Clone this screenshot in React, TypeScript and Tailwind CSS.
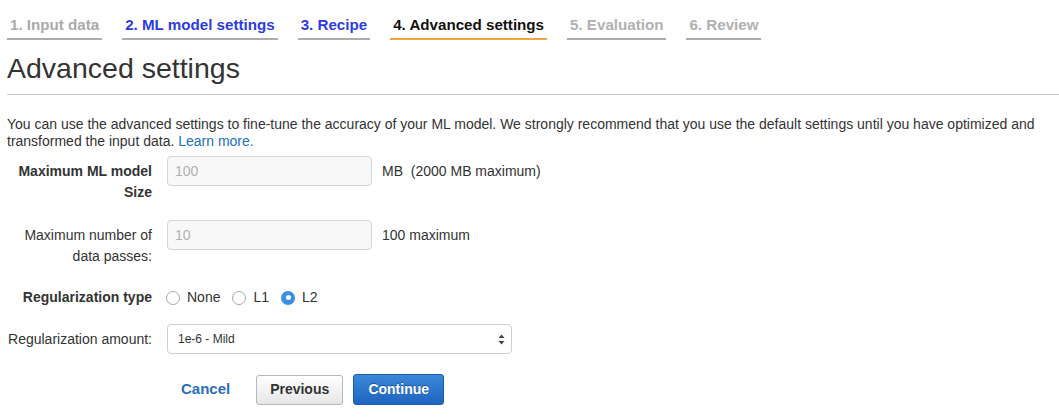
import React from 'react';

const steps = [
  { label: '1. Input data', text: 'text-[#aaaaaa]', line: 'border-[#acacac]' },
  { label: '2. ML model settings', text: 'text-[#2d3be6]', line: 'border-[#acacac]' },
  { label: '3. Recipe', text: 'text-[#2d3be6]', line: 'border-[#acacac]' },
  { label: '4. Advanced settings', text: 'text-[#111111]', line: 'border-[#f5a33a]' },
  { label: '5. Evaluation', text: 'text-[#b0b0b0]', line: 'border-[#acacac]' },
  { label: '6. Review', text: 'text-[#b0b0b0]', line: 'border-[#acacac]' },
];

function Radio({ label, checked }: { label: string; checked?: boolean }) {
  return (
    <label className="flex items-center gap-[7px]">
      {checked ? (
        <span className="flex h-[14px] w-[14px] items-center justify-center rounded-full bg-[#3a8ee6]">
          <span className="h-[5px] w-[5px] rounded-full bg-white" />
        </span>
      ) : (
        <span className="h-[14px] w-[14px] rounded-full border border-[#a8a8a8] bg-white" />
      )}
      <span>{label}</span>
    </label>
  );
}

export default function App() {
  return (
    <div
      className="min-h-[420px] w-[1059px] bg-white text-[14px] text-[#333333]"
      style={{ fontFamily: '"Liberation Sans", Arial, sans-serif' }}
    >
      {/* wizard steps */}
      <div className="flex gap-[20px] pl-[7px] pt-[16px]">
        {steps.map((s) => (
          <div
            key={s.label}
            className={`border-b-2 px-[3px] pb-[4px] text-[15.15px] font-bold leading-[18px] ${s.text} ${s.line}`}
          >
            {s.label}
          </div>
        ))}
      </div>

      <div className="pl-[7px]">
        <h1 className="mt-[12px] text-[28.5px] leading-[32px] text-[#333333]">Advanced settings</h1>
        <div className="mt-[10px] border-t border-[#cccccc]" />

        <p className="mt-[21px] pr-[4px] leading-[17px]">
          You can use the advanced settings to fine-tune the accuracy of your ML model. We strongly recommend
          that you use the default settings until you have optimized and transformed the input data.{' '}
          <span className="text-[#2070c0]">Learn more.</span>
        </p>

        {/* max model size */}
        <div className="mt-[6px] flex items-start">
          <div className="w-[145px] pt-[5px] text-right font-bold leading-[21px]">
            Maximum ML model
            <br />
            Size
          </div>
          <div className="ml-[15px] flex h-[30px] w-[205px] items-center rounded-[4px] border border-[#d5d5d5] bg-[#f8f8f8] pl-[7px] text-[#b0b0b0]">
            100
          </div>
          <div className="ml-[10px] pt-[5px] leading-[21px] whitespace-pre">MB  (2000 MB maximum)</div>
        </div>

        {/* data passes */}
        <div className="mt-[17px] flex items-start">
          <div className="w-[145px] pt-[5px] text-right leading-[21px]">
            Maximum number of
            <br />
            data passes:
          </div>
          <div className="ml-[15px] flex h-[30px] w-[205px] items-center rounded-[4px] border border-[#d5d5d5] bg-[#f8f8f8] pl-[7px] text-[#b0b0b0]">
            10
          </div>
          <div className="ml-[10px] pt-[5px] leading-[21px]">100 maximum</div>
        </div>

        {/* regularization type */}
        <div className="mt-[20px] flex items-center leading-[21px]">
          <div className="w-[145px] text-right font-bold">Regularization type</div>
          <div className="ml-[14px] flex items-center gap-[12px]">
            <Radio label="None" />
            <Radio label="L1" />
            <Radio label="L2" checked />
          </div>
        </div>

        {/* regularization amount */}
        <div className="mt-[16px] flex items-center">
          <div className="w-[145px] text-right leading-[21px]">Regularization amount:</div>
          <div className="ml-[15px] flex h-[30px] w-[345px] items-center justify-between rounded-[4px] border border-[#cfcfcf] bg-white pl-[10px] pr-[6px] text-[12px] text-[#333333]">
            <span>1e-6 - Mild</span>
            <svg width="7" height="11" viewBox="0 0 7 11" className="text-[#444444]">
              <path d="M3.5 0.5 L6.5 4 H0.5 Z" fill="currentColor" />
              <path d="M3.5 10.5 L6.5 7 H0.5 Z" fill="currentColor" />
            </svg>
          </div>
        </div>

        {/* actions */}
        <div className="mt-[20px] flex items-center pl-[160px]">
          <button className="px-[14px] text-[15px] font-bold text-[#2a6ebb]">Cancel</button>
          <button className="ml-[12px] h-[30px] w-[87px] rounded-[3px] border border-[#b8b8b8] bg-gradient-to-b from-white to-[#e6e6e6] text-[14px] font-bold text-[#333333]">
            Previous
          </button>
          <button
            className="ml-[10px] h-[31px] w-[91px] rounded-[3px] border border-[#1c5cad] bg-gradient-to-b from-[#3a87d9] to-[#1f64bf] text-[14px] font-bold text-white"
            style={{ textShadow: '0 -1px 0 rgba(0,0,0,0.35)' }}
          >
            Continue
          </button>
        </div>
      </div>
    </div>
  );
}
